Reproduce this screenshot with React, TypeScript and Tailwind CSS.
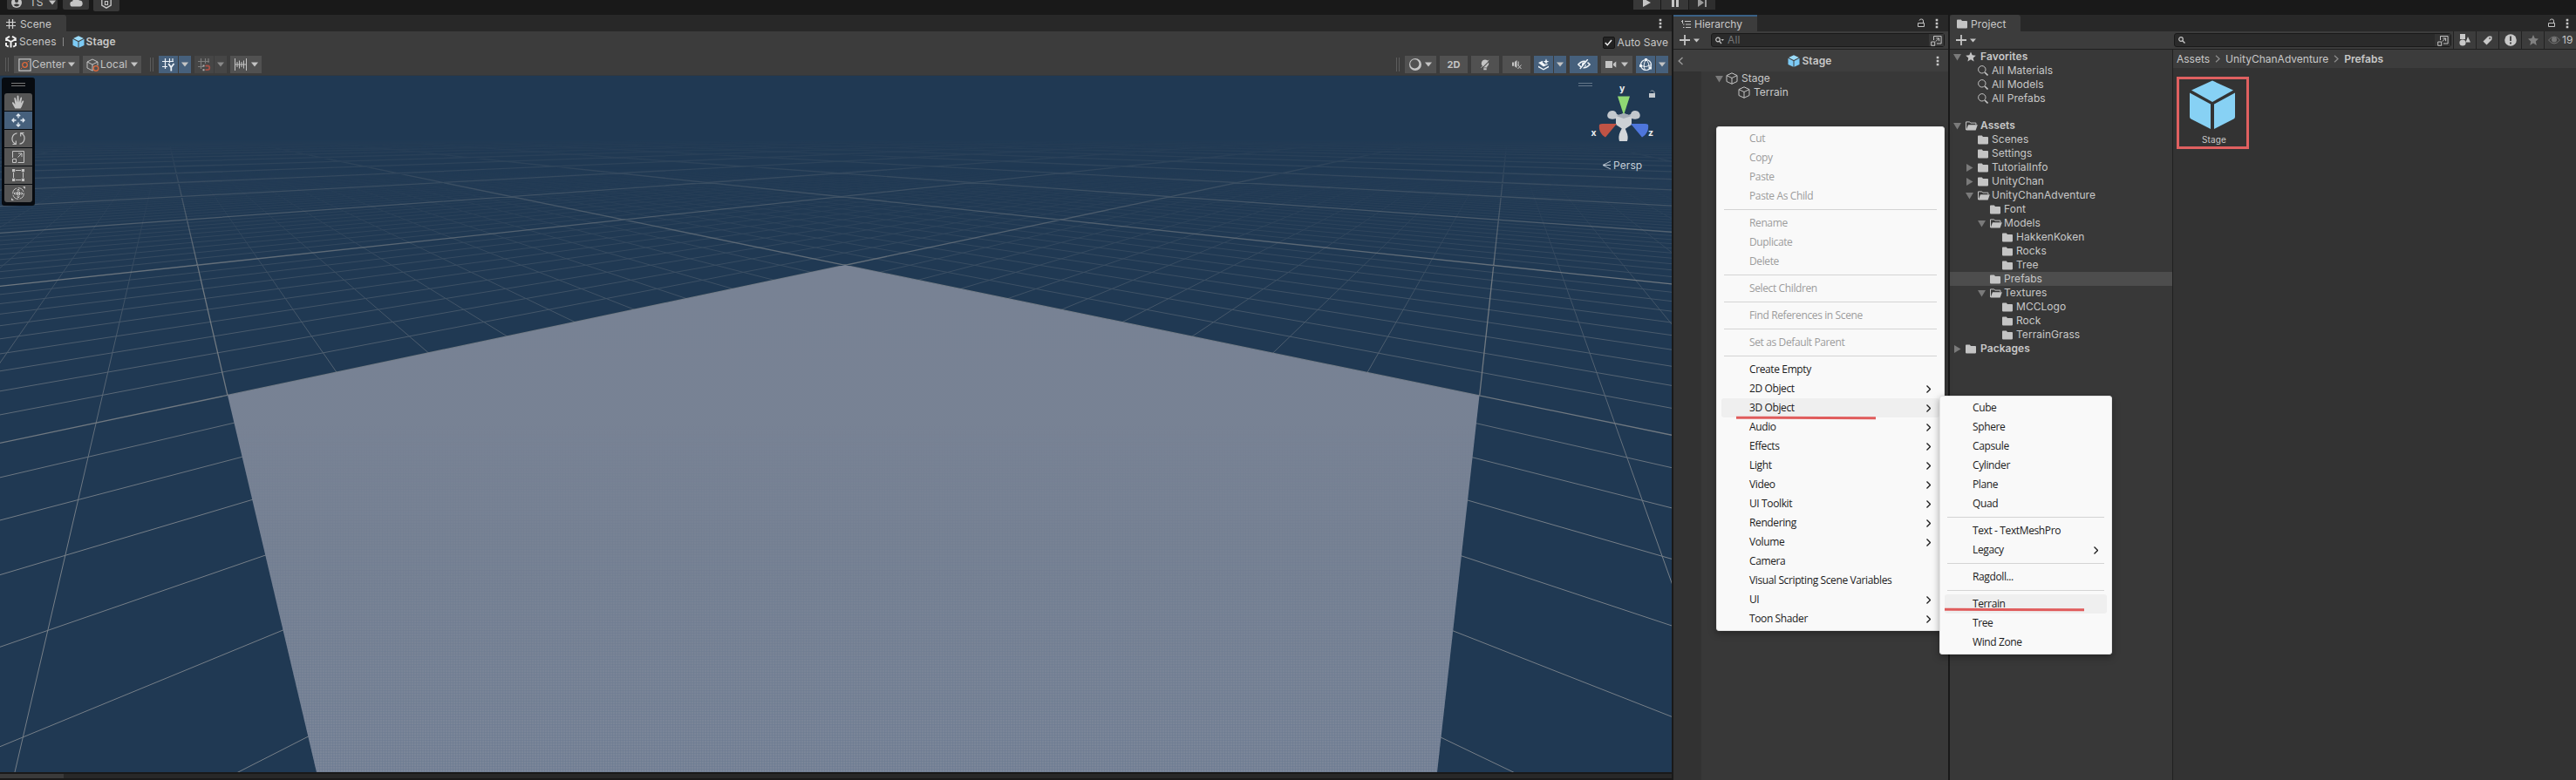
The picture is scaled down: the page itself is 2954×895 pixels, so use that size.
import { useState } from "react";
import type { ReactNode } from "react";

type MenuEntry = { label: string; disabled?: boolean; sub?: boolean; active?: boolean } | null;

const hierarchyMenu: MenuEntry[] = [
  { label: "Cut", disabled: true },
  { label: "Copy", disabled: true },
  { label: "Paste", disabled: true },
  { label: "Paste As Child", disabled: true },
  null,
  { label: "Rename", disabled: true },
  { label: "Duplicate", disabled: true },
  { label: "Delete", disabled: true },
  null,
  { label: "Select Children", disabled: true },
  null,
  { label: "Find References in Scene", disabled: true },
  null,
  { label: "Set as Default Parent", disabled: true },
  null,
  { label: "Create Empty" },
  { label: "2D Object", sub: true },
  { label: "3D Object", sub: true, active: true },
  { label: "Audio", sub: true },
  { label: "Effects", sub: true },
  { label: "Light", sub: true },
  { label: "Video", sub: true },
  { label: "UI Toolkit", sub: true },
  { label: "Rendering", sub: true },
  { label: "Volume", sub: true },
  { label: "Camera" },
  { label: "Visual Scripting Scene Variables" },
  { label: "UI", sub: true },
  { label: "Toon Shader", sub: true },
];

const objectMenu: MenuEntry[] = [
  { label: "Cube" },
  { label: "Sphere" },
  { label: "Capsule" },
  { label: "Cylinder" },
  { label: "Plane" },
  { label: "Quad" },
  null,
  { label: "Text - TextMeshPro" },
  { label: "Legacy", sub: true },
  null,
  { label: "Ragdoll..." },
  null,
  { label: "Terrain", active: true },
  { label: "Tree" },
  { label: "Wind Zone" },
];

type Folder = { name: string; depth: number; open?: boolean; arrow?: boolean; bold?: boolean; selected?: boolean };

const folders: Folder[] = [
  { name: "Assets", depth: 0, open: true, arrow: true, bold: true },
  { name: "Scenes", depth: 1 },
  { name: "Settings", depth: 1 },
  { name: "TutorialInfo", depth: 1, arrow: true },
  { name: "UnityChan", depth: 1, arrow: true },
  { name: "UnityChanAdventure", depth: 1, open: true, arrow: true },
  { name: "Font", depth: 2 },
  { name: "Models", depth: 2, open: true, arrow: true },
  { name: "HakkenKoken", depth: 3 },
  { name: "Rocks", depth: 3 },
  { name: "Tree", depth: 3 },
  { name: "Prefabs", depth: 2, selected: true },
  { name: "Textures", depth: 2, open: true, arrow: true },
  { name: "MCCLogo", depth: 3 },
  { name: "Rock", depth: 3 },
  { name: "TerrainGrass", depth: 3 },
  { name: "Packages", depth: 0, arrow: true, bold: true },
];

const indents = ["pl-[4px]", "pl-[18px]", "pl-[32px]", "pl-[46px]"];

function Icon({ w = 16, h = 16, className = "", children }: { w?: number; h?: number; className?: string; children: ReactNode }) {
  return (
    <svg width={w} height={h} viewBox={`0 0 ${w} ${h}`} fill="none" stroke="currentColor" className={`shrink-0 ${className}`}>
      {children}
    </svg>
  );
}

function Caret({ className = "" }: { className?: string }) {
  return (
    <Icon w={8} h={6} className={className}>
      <path d="M0 .5h8L4 5.5z" fill="currentColor" stroke="none" />
    </Icon>
  );
}

function Dots() {
  return (
    <Icon w={4} h={12} className="text-[#c8c8c8]">
      <path d="M.7.8h2.6v2.4H.7zM.7 4.8h2.6v2.4H.7zM.7 8.8h2.6v2.4H.7z" fill="currentColor" stroke="none" />
    </Icon>
  );
}

function Lock() {
  return (
    <Icon w={10} h={11} className="text-[#c4c4c4]">
      <path d="M1.5 5.5h7v4h-7zM7.5 5V3a2 2 0 0 0-2-2H5a2 2 0 0 0-2 1.6" />
    </Icon>
  );
}

function Grip() {
  return <div className="h-4 w-[4px] border-x border-[#5c5c5c]" />;
}

function PrefabCube() {
  return (
    <Icon w={14} h={14}>
      <path d="M7 .2 12.9 3 7 6 1.1 3z" fill="#9bdcfb" stroke="none" />
      <path d="M.5 3.8 6.5 6.9v6.9L.5 10.9zM13.5 3.8 7.5 6.9v6.9l6-2.9z" fill="#7ccaf5" stroke="none" />
    </Icon>
  );
}

function CubeOutline() {
  return (
    <Icon w={14} h={14} className="text-[#c4c4c4]">
      <path d="M7 .8 13 3.6v6.9l-6 2.8-6-2.8V3.6zM1 3.6l6 2.9 6-2.9M7 6.5v6.8" />
    </Icon>
  );
}

function FolderIcon({ open }: { open?: boolean }) {
  if (open) {
    return (
      <Icon w={14} h={11} className="text-[#c4c4c4]">
        <path d="M.5 10V.9h4.2l1 1.2h6.2v2" />
        <path d="M3 4.3h10.8L11.6 10.6H.6z" fill="currentColor" stroke="none" />
      </Icon>
    );
  }
  return (
    <Icon w={14} h={11} className="text-[#c4c4c4]">
      <path d="M0 1.4Q0 .6.8.6h4L6 2.1h5.2q.8 0 .8.8v6.7q0 .8-.8.8H.8Q0 10.4 0 9.6z" fill="currentColor" stroke="none" />
    </Icon>
  );
}

function Fold({ open }: { open?: boolean }) {
  return (
    <Icon w={9} h={9} className="text-[#7a7a7a]">
      <path d={open ? "M0 1h9L4.5 8.5z" : "M1 0v9l7.5-4.5z"} fill="currentColor" stroke="none" />
    </Icon>
  );
}

function Plus() {
  return (
    <div className="flex items-center gap-[4px] text-[#c4c4c4]">
      <Icon w={12} h={12}>
        <path d="M6 0v12M0 6h12" strokeWidth="1.8" />
      </Icon>
      <Icon w={7} h={5}>
        <path d="M0 .5h7L3.5 4.5z" fill="currentColor" stroke="none" />
      </Icon>
    </div>
  );
}

function SearchWindow() {
  return (
    <Icon w={13} h={13} className="text-[#c4c4c4]">
      <path d="M3.500 6V1.500h8.600V10H7M.7 8h4v4.300h-4zM5.800 7.600l3.600-3.700M6.300 3.900h3.300v3.300" />
    </Icon>
  );
}

function Menu({ items, className }: { items: MenuEntry[]; className: string }) {
  return (
    <div
      className={`absolute rounded-[3px] border border-[#e4e4e4] bg-[#f9f9f9] py-[2px] font-['Open_Sans','Noto_Sans',sans-serif] text-[12px] tracking-[-0.38px] shadow-[0_3px_8px_rgba(0,0,0,0.35)] ${className}`}
    >
      {items.map((item, i) =>
        item === null ? (
          <div key={i} className="flex h-[9px] items-center px-[8px]">
            <div className="h-px w-full bg-[#d4d4d4]" />
          </div>
        ) : (
          <div
            key={i}
            className={`mx-[5px] flex h-[22px] items-center justify-between rounded-[3px] pr-[10px] pl-[32px] ${item.active ? "bg-[#efefef]" : ""} ${item.disabled ? "text-[#9c9c9c]" : "text-[#1b1b1b]"}`}
          >
            <span className="whitespace-nowrap">{item.label}</span>
            {item.sub && (
              <Icon w={5} h={9}>
                <path d="M.5.5l4 4-4 4" strokeWidth="1.3" />
              </Icon>
            )}
          </div>
        )
      )}
    </div>
  );
}

// Perspective ground grid. One unit is one major cell, ten minor cells each.
const vpU = [189.5, 57];
const vpV = [1730, 57];
const apex = [969, 217.3];
const cu = -0.4828;
const cv = -0.482;

function project(u: number, v: number) {
  const w = 1 + cu * u + cv * v;
  const x = (apex[0] + u * cu * vpU[0] + v * cv * vpV[0]) / w;
  const y = (apex[1] + u * cu * vpU[1] + v * cv * vpV[1]) / w;
  return `${x.toFixed(1)} ${y.toFixed(1)}`;
}

function gridPath(step: number, range: number, skip: boolean) {
  let d = "";
  const n = Math.round(range / step);
  for (let i = -n; i <= n; i++) {
    if (skip && i % 10 === 0) continue;
    const k = i * step;
    const uFar = (1 + cv * k - 40) / -cu;
    const vFar = (1 + cu * k - 40) / -cv;
    // the k = 1 lines stop at the terrain corners
    const uNear = k === 1 ? 0 : (1 + cv * k - 0.08) / -cu;
    const vNear = k === 1 ? 0 : (1 + cu * k - 0.08) / -cv;
    d += `M${project(uFar, k)}L${project(uNear, k)}M${project(k, vFar)}L${project(k, vNear)}`;
  }
  return d;
}

const minorGrid = gridPath(0.1, 7, true);
const majorGrid = gridPath(1, 40, false);

function SceneView() {
  return (
    <svg width="1917" height="799" viewBox="0 0 1917 799" className="block">
      <defs>
        <linearGradient id="minorFade" x1="0" y1="0" x2="0" y2="799" gradientUnits="userSpaceOnUse">
          <stop offset="0.13" stopColor="#fff" stopOpacity="0" />
          <stop offset="0.2" stopColor="#fff" stopOpacity="0.12" />
          <stop offset="0.32" stopColor="#fff" stopOpacity="0.36" />
          <stop offset="0.46" stopColor="#fff" stopOpacity="0.65" />
          <stop offset="0.65" stopColor="#fff" stopOpacity="0.95" />
        </linearGradient>
        <linearGradient id="majorFade" x1="0" y1="0" x2="0" y2="799" gradientUnits="userSpaceOnUse">
          <stop offset="0.09" stopColor="#fff" stopOpacity="0" />
          <stop offset="0.13" stopColor="#fff" stopOpacity="0.16" />
          <stop offset="0.2" stopColor="#fff" stopOpacity="0.45" />
          <stop offset="0.3" stopColor="#fff" stopOpacity="0.85" />
        </linearGradient>
        <linearGradient id="ground" x1="0" y1="0" x2="0" y2="1">
          <stop offset="0" stopColor="#788294" />
          <stop offset="0.6" stopColor="#778294" />
          <stop offset="1" stopColor="#7b8699" />
        </linearGradient>
        <pattern id="weave" width="3" height="3" patternUnits="userSpaceOnUse">
          <path d="M0 .5h3M.5 0v3" stroke="#5f708a" strokeWidth="0.5" />
        </pattern>
        <linearGradient id="weaveFade" x1="0" y1="0" x2="0" y2="799" gradientUnits="userSpaceOnUse">
          <stop offset="0.5" stopColor="#fff" stopOpacity="0" />
          <stop offset="1" stopColor="#fff" stopOpacity="0.6" />
        </linearGradient>
        <mask id="minorMask" maskUnits="userSpaceOnUse" x="0" y="0" width="1917" height="799">
          <rect width="1917" height="799" fill="url(#minorFade)" />
        </mask>
        <mask id="majorMask" maskUnits="userSpaceOnUse" x="0" y="0" width="1917" height="799">
          <rect width="1917" height="799" fill="url(#majorFade)" />
        </mask>
        <mask id="weaveMask" maskUnits="userSpaceOnUse" x="0" y="0" width="1917" height="799">
          <rect width="1917" height="799" fill="url(#weaveFade)" />
        </mask>
      </defs>
      <rect width="1917" height="799" fill="#203953" />
      <g mask="url(#minorMask)">
        <path d={minorGrid} stroke="#7b838b" strokeWidth="1" fill="none" />
      </g>
      <g mask="url(#majorMask)">
        <path d={majorGrid} stroke="#7e8489" strokeWidth="1.3" fill="none" />
      </g>
      <path d="M969 217.3 1696.5 367 1648 799H363L261 366.5z" fill="url(#ground)" />
      <g mask="url(#weaveMask)">
        <path d="M969 217.3 1696.5 367 1648 799H363L261 366.5z" fill="url(#weave)" />
      </g>
    </svg>
  );
}

function AxisGizmo() {
  return (
    <svg width="110" height="115" viewBox="1805 87 110 115" className="absolute top-0 left-[1805px] font-[Inter,sans-serif]">
      <path d="M1810 95.5h16M1810 98.5h16" stroke="#66788a" />
      <path d="M1849 127c-5 0-7 5-5 8 2 2 6 2 9 1l7 3 2-5-8-3c-1-3-2-4-5-4zM1875 127c5 0 7 5 5 8-2 2-6 2-9 1l-7 3-2-5 8-3c1-3 2-4 5-4z" fill="#c3c8cd" />
      <path d="M1862 143l3 8c2 4 2 8 1 11h-9c-1-3-1-7 1-11z" fill="#d3d6da" />
      <path d="M1853 133l9-3 9 3v10l-9 6-9-6z" fill="#cdd1d5" />
      <path d="M1853 133l9-3 9 3-9 3z" fill="#a5abb5" />
      <path d="M1855 110.500h14l-6.500 20h-1z" fill="#8fd873" />
      <path d="M1834 143q2-1.500 5-1h15l-13 15.500c-5-3-8-8-7-14.500z" fill="#c05345" />
      <path d="M1890 143q-2-1.500-5-1h-15l13 15.500c5-3 8-8 7-14.500z" fill="#4e76dc" />
      <path d="M1891 107h7v5h-7z" fill="#c4c9ce" />
      <path d="M1897 107v-1.500a2.500 2 0 0 0-4.500-.5" stroke="#9aa5ae" fill="none" />
      <g fill="#e8ebee" fontSize="10.500" fontWeight="700" textAnchor="middle">
        <text x="1860.300" y="105">y</text>
        <text x="1827.700" y="156">x</text>
        <text x="1893" y="156">z</text>
      </g>
      <path d="M1847 185l-9 4.500 9 4.500M1838 189.500h9" stroke="#b9c4cf" fill="none" />
      <text x="1850" y="194" fill="#c5ced7" fontSize="12">Persp</text>
    </svg>
  );
}

const toolIcons: ReactNode[] = [
  <path d="M4.300 15.500 1 9.500c-.4-1 .9-1.600 1.600-.7L4.500 11 3.300 4c-.1-1.200 1.400-1.400 1.700-.2L6.500 8.500 6.600 1.500C6.700.3 8.300.3 8.400 1.500L8.800 8.500l1.700-5.300c.4-1 1.800-.7 1.600.5L11 9.500l1.800-2.700c.6-.8 1.700-.3 1.400.7l-2.400 6-1.300 2z" fill="currentColor" stroke="none" />,
  <path d="M8 1v4.500M8 10.500V15M1 8h4.500M10.500 8H15M5.800 3.200 8 1l2.200 2.200M5.800 12.800 8 15l2.200-2.200M3.200 5.800 1 8l2.200 2.200M12.800 5.800 15 8l-2.200 2.200" strokeWidth="1.300" />,
  <path d="M6.500 1.800A6.500 6.500 0 0 0 4.500 14M1.500 14.500h3.800v-4M9.500 14.200A6.500 6.500 0 0 0 11.500 2M14.500 1.500h-3.800v4" strokeWidth="1.200" />,
  <path d="M1.500 9V1.500h13v13H7.500M1.500 10.500h4v4h-4zM7.500 8.500l4.300-4.300M8 4h4v4" />,
  <>
    <path d="M5 2.500h6M5 13.500h6M2.500 5v6M13.500 5v6" />
    <path d="M1 1h3.200v3.200H1zM11.800 1H15v3.200h-3.200zM1 11.800h3.200V15H1zM11.800 11.800H15V15h-3.200z" fill="currentColor" stroke="none" />
  </>,
  <>
    <circle cx="8" cy="8" r="6.300" strokeDasharray="8 1.500" />
    <path d="M8 3v10M3 8h10M6.500 4.500 8 3l1.500 1.500M6.500 11.500 8 13l1.500-1.500M4.500 6.500 3 8l1.500 1.500M11.500 6.500 13 8l-1.500 1.500M6.500 6v4M9.500 6v4" />
    <path d="M13 0h3v3zM0 13v3h3z" fill="currentColor" stroke="none" />
  </>,
];

function ToolPalette() {
  const [tool, setTool] = useState(1);
  return (
    <div className="absolute top-[2px] left-[2px] flex h-[147px] w-[38px] flex-col items-center rounded-[3px] bg-[#070b10]">
      <div className="mt-[6px] mb-[8px] h-[4px] w-4 border-y border-[#7a7a7a]" />
      <div className="flex flex-col gap-px overflow-hidden rounded-[3px]">
        {toolIcons.map((icon, i) => (
          <button
            key={i}
            onClick={() => setTool(i)}
            className={`flex h-[20px] w-[32px] items-center justify-center ${tool === i ? "bg-[#46607c] text-[#e4ecf4]" : "bg-[#555555] text-[#c4c4c4]"}`}
          >
            <Icon>{icon}</Icon>
          </button>
        ))}
      </div>
    </div>
  );
}

function Button({ className = "", children }: { className?: string; children: ReactNode }) {
  return <div className={`flex h-[20px] items-center justify-center ${className}`}>{children}</div>;
}

function SceneToolbar() {
  return (
    <div className="flex h-[25px] shrink-0 items-center justify-between border-b border-[#33383d] bg-[#3c3c3c] pr-[4px] pl-[6px] text-[#c4c4c4]">
      <div className="flex items-center">
        <Grip />
        <Button className="ml-[6px] w-[75px] bg-[#515151]">
          <Icon w={15} h={15}>
            <path d="M.9.9h13.200v13.200H.9z" strokeWidth="1.200" />
            <circle cx="7.500" cy="7.500" r="2.800" stroke="#e0693c" strokeWidth="1.300" />
            <path d="M2.800 12.200l1.500-1.500M10.700 4.300l1.500-1.500" stroke="#e0693c" />
          </Icon>
          <span className="mr-[3px] ml-px">Center</span>
          <Caret />
        </Button>
        <Button className="ml-[4px] w-[67px] bg-[#515151]">
          <Icon w={15} h={15}>
            <path d="M8 13.500 7 14 1 11V4l6-3 6 3v4M1 4l6 3 6-3M7 7v6.500" />
            <circle cx="11" cy="11.500" r="2.800" fill="#515151" stroke="#e0693c" strokeWidth="1.300" />
          </Icon>
          <span className="mr-[4px] ml-px">Local</span>
          <Caret />
        </Button>
        <div className="mr-[6px] ml-[10px]">
          <Grip />
        </div>
        <Button className="w-[22px] bg-[#46607c] text-[#eef3f8]">
          <Icon w={15} h={15}>
            <path d="M3.500 0v12M8.500 0v5M12 0v4M0 3.500h13M0 9.500h6" strokeWidth="1.200" />
            <path d="M7.200 6l3 4.200L13.500 6M10.300 10v4.500" strokeWidth="1.800" />
          </Icon>
        </Button>
        <Button className="ml-px w-[14px] bg-[#46607c]">
          <Caret />
        </Button>
        <Button className="ml-[4px] w-[22px] bg-[#464646] text-[#7c7c7c]">
          <Icon w={15} h={15}>
            <path d="M3.500 0v12M8.500 0v6M12 0v5M0 3.500h13M0 9.500h6" strokeWidth="1.200" />
            <path d="M8.500 8.500h2.500a2.200 2.200 0 0 1 0 4.600H8.500" stroke="#a55046" strokeWidth="1.800" />
            <path d="M5.500 7.500h2v2h-2zM5.500 12.300h2v2h-2z" fill="#b0b0b0" stroke="none" />
          </Icon>
        </Button>
        <Button className="ml-px w-[14px] bg-[#464646] text-[#8a8a8a]">
          <Caret />
        </Button>
        <Button className="ml-[4px] w-[36px] gap-[5px] bg-[#515151]">
          <Icon w={14} h={14}>
            <path d="M.5 0v14M13.500 0v14M3 4v6M5.500 2.500v9M8 4v6M10.500 2.500v9M.5 7h13" />
          </Icon>
          <Caret />
        </Button>
      </div>

      <div className="flex items-center">
        <Grip />
        <Button className="ml-[6px] w-[36px] gap-[4px] bg-[#515151]">
          <Icon w={14} h={14}>
            <path
              d="M7 0a7 7 0 1 1 0 14a7 7 0 1 1 0-14zM6.300 1.200a5.100 5.100 0 1 0 0 10.200a5.100 5.100 0 1 0 0-10.200z"
              fill="currentColor"
              fillRule="evenodd"
              stroke="none"
            />
          </Icon>
          <Caret />
        </Button>
        <Button className="ml-[4px] w-[32px] bg-[#515151] text-[11px] font-bold">2D</Button>
        <Button className="ml-[4px] w-[32px] bg-[#515151]">
          <Icon w={12} h={13}>
            <path d="M6 .5a4.200 4.200 0 0 1 2.300 7.700V9.500H3.700V8.200A4.200 4.200 0 0 1 6 .5zM4.300 10.300h3.400v1.900H4.300z" fill="currentColor" stroke="none" />
            <path d="M2 10.800l8.500-8.500" stroke="#515151" strokeWidth="1.200" />
            <path d="M1.300 9.800l9-9" strokeWidth=".8" />
          </Icon>
        </Button>
        <Button className="ml-[4px] w-[32px] bg-[#515151]">
          <Icon w={13} h={12}>
            <path d="M1 3.500h2.300L6.500 1v9L3.300 7.800H1z" fill="currentColor" stroke="none" />
            <path d="M3.500 1v8" stroke="#515151" strokeWidth=".8" />
            <path d="M8.200 2.500v5M7.500 6.500l4 4.500M11.500 6.500l-4 4.500" />
          </Icon>
        </Button>
        <Button className="ml-[4px] w-[22px] bg-[#46607c] text-[#f0f4f8]">
          <Icon w={14} h={14}>
            <path d="M1 5l5-2.200v2L9 7l2.500-.8 1 .5L7 9.500zM1 8.500 7 12l6-3.500v1.800L7 13.500 1 10.300z" fill="currentColor" stroke="none" />
            <path d="M10 .3l.9 2.500 2.500.9-2.500.9-.9 2.500-.9-2.500-2.500-.9 2.500-.9z" fill="currentColor" stroke="none" />
          </Icon>
        </Button>
        <Button className="ml-px w-[14px] bg-[#46607c]">
          <Caret />
        </Button>
        <Button className="ml-[4px] w-[32px] bg-[#46607c] text-[#f0f4f8]">
          <Icon w={15} h={12}>
            <path d="M.8 6Q7.500-1.500 14.200 6 7.500 13.500.8 6z" strokeWidth="1.400" />
            <circle cx="7.500" cy="6" r="2.200" fill="currentColor" />
            <path d="M3.500 11.800l9-11" stroke="#46607c" strokeWidth="2" />
            <path d="M2.800 11l9-11" strokeWidth="1.400" />
          </Icon>
        </Button>
        <Button className="ml-[4px] w-[36px] gap-[5px] bg-[#515151]">
          <Icon w={13} h={10}>
            <path d="M0 1h8v8H0zM9 4l3.300-2.500v7L9 6z" fill="currentColor" stroke="none" />
          </Icon>
          <Caret />
        </Button>
        <Button className="ml-[4px] w-[22px] bg-[#46607c] text-[#f0f4f8]">
          <Icon w={15} h={15}>
            <circle cx="7.500" cy="7.500" r="6" strokeWidth="1.200" />
            <path d="M7.500 1.500Q3.500 7 6.500 13.500M7.500 1.500Q11.500 5 11 11.500M1.500 8.500Q7.500 11 13.500 7.500" />
            <path d="M6 0h3v3H6zM0 7h3v3H0zM11 9.500h3v3h-3z" fill="currentColor" stroke="none" />
          </Icon>
        </Button>
        <Button className="ml-px w-[14px] bg-[#46607c]">
          <Caret />
        </Button>
      </div>
    </div>
  );
}

function TopBar() {
  return (
    <header className="flex h-[17px] shrink-0 items-start overflow-hidden bg-[#191919] pl-[8px] text-[#c4c4c4]">
      <div className="-mt-[9px] flex h-[20px] w-[58px] items-center rounded-[2px] bg-[#383838] pt-[4px] pl-[5px]">
        <Icon w={12} h={12}>
          <circle cx="6" cy="6" r="6" fill="currentColor" stroke="none" />
          <circle cx="6" cy="4" r="2" fill="#383838" stroke="none" />
          <path d="M2.500 8.800Q6 5.500 9.500 8.800 6 12 2.500 8.800z" fill="#383838" stroke="none" />
        </Icon>
        <span className="ml-[9px] text-[12px]">TS</span>
        <Caret className="ml-[6px]" />
      </div>
      <div className="-mt-[9px] ml-[6px] flex h-[20px] w-[30px] items-center justify-center rounded-[2px] bg-[#383838] pt-[3px]">
        <Icon w={15} h={11}>
          <path d="M3.500 10.500a3 3 0 0 1-.3-6 4 4 0 0 1 7.600-1 3.500 3.500 0 0 1 .7 7z" fill="currentColor" stroke="none" />
        </Icon>
      </div>
      <div className="-mt-[9px] ml-[5px] flex h-[22px] w-[30px] items-center justify-center rounded-[2px] bg-[#383838] pt-[2px]">
        <Icon w={12} h={14}>
          <path d="M6 .8l5.200 3v6.400L6 13.200.8 10.200V3.800z" strokeWidth="1.400" />
          <path d="M4.500 5.500h3v4h-3z" strokeWidth="1.200" />
        </Icon>
      </div>
      <div className="-mt-[9px] ml-[1736px] flex gap-px">
        <div className="flex h-[20px] w-[31px] items-center justify-center bg-[#383838] pt-[4px]">
          <Icon w={9} h={10}>
            <path d="M0 0v10l9-5z" fill="currentColor" stroke="none" />
          </Icon>
        </div>
        <div className="flex h-[20px] w-[31px] items-center justify-center bg-[#383838] pt-[4px]">
          <Icon w={8} h={10}>
            <path d="M0 0h3v10H0zM5 0h3v10H5z" fill="currentColor" stroke="none" />
          </Icon>
        </div>
        <div className="flex h-[20px] w-[30px] items-center justify-center bg-[#2e2e2e] pt-[4px] text-[#9a9a9a]">
          <Icon w={10} h={10}>
            <path d="M0 0v10l7-5zM8 0h2v10H8z" fill="currentColor" stroke="none" />
          </Icon>
        </div>
      </div>
    </header>
  );
}

function ScenePanel() {
  return (
    <section className="flex w-[1917px] shrink-0 flex-col">
      <div className="flex h-[19px] shrink-0 items-stretch justify-between bg-[#282828] pr-[11px]">
        <div className="flex w-[76px] items-center rounded-tr-[3px] bg-[#3c3c3c] pt-[2px] pl-[7px]">
          <Icon w={11} h={11} className="text-[#d2d2d2]">
            <path d="M3.500 0v11M7.500 0v11M0 3.500h11M0 7.500h11" strokeWidth="1.200" />
          </Icon>
          <span className="ml-[5px]">Scene</span>
        </div>
        <div className="flex items-center">
          <Dots />
        </div>
      </div>
      <div className="flex h-[26px] shrink-0 items-center justify-between bg-[#3c3c3c] pr-[4px] pl-[6px]">
        <div className="flex items-center pb-[3px]">
          <Icon w={13} h={14} className="text-[#f0f0f0]">
            <path d="M5 .8 1.200 3v3M8 .8 11.800 3v3M1 8v3l2.800 1.700M12 8v3l-2.800 1.700M1.500 4 6.500 7l5-3M6.500 7v6.500" strokeWidth="2" />
          </Icon>
          <span className="ml-[3px]">Scenes</span>
          <div className="mr-[10px] ml-[7px] h-[10px] w-px bg-[#8a8a8a]" />
          <PrefabCube />
          <span className="ml-[2px] font-semibold">Stage</span>
        </div>
        <div className="flex items-center">
          <div className="flex h-[14px] w-[14px] items-center justify-center rounded-[2px] border border-[#151515] bg-[#232323]">
            <Icon w={9} h={8} className="text-[#f0f0f0]">
              <path d="M.8 4l2.500 2.700L8 1" strokeWidth="1.500" />
            </Icon>
          </div>
          <span className="ml-[3px]">Auto Save</span>
        </div>
      </div>
      <SceneToolbar />
      <div className="relative h-[799px] shrink-0 overflow-hidden">
        <SceneView />
        <ToolPalette />
        <AxisGizmo />
      </div>
      <div className="h-[9px] border-y-2 border-[#191919] bg-[#282828]">
        <div className="h-full w-[73px] bg-[#3a3a3a]" />
      </div>
    </section>
  );
}

function HierarchyPanel() {
  return (
    <section className="ml-[2px] flex w-[315px] shrink-0 flex-col bg-[#383838]">
      <div className="flex h-[19px] shrink-0 items-stretch justify-between bg-[#282828] pr-[11px]">
        <div className="flex w-[96px] items-center border-t-2 border-[#3a6186] bg-[#3c3c3c] pl-[9px]">
          <Icon w={11} h={10} className="text-[#c4c4c4]">
            <path d="M0 1.500h2M4 1.500h7M2 5h1.500M5 5h6M2 8.500h1.500M5 8.500h6M1.500 0v4" />
          </Icon>
          <span className="ml-[4px] tracking-[0px]">Hierarchy</span>
        </div>
        <div className="flex items-center gap-[11px]">
          <Lock />
          <Dots />
        </div>
      </div>
      <div className="flex h-[21px] shrink-0 items-center border-b border-[#202020] bg-[#3c3c3c] pl-[7px]">
        <Plus />
        <div className="ml-[13px] flex h-[16px] w-[268px] items-center rounded-[3px] border border-[#191919] bg-[#2a2a2a] pl-[4px]">
          <Icon w={10} h={9} className="text-[#c4c4c4]">
            <circle cx="3" cy="3.500" r="2.300" strokeWidth="1.200" />
            <path d="M4.800 5.300 7 8" strokeWidth="1.300" />
            <path d="M6.500 3h3.500L8.300 5z" fill="currentColor" stroke="none" />
          </Icon>
          <span className="ml-[4px] text-[#757575]">All</span>
          <div className="ml-auto flex h-full w-[17px] items-center justify-center bg-[#383838]">
            <SearchWindow />
          </div>
        </div>
      </div>
      <div className="flex h-[25px] shrink-0 items-center bg-[#3e3e3e] pr-[10px] pl-[5px]">
        <Icon w={7} h={10} className="text-[#9a9a9a]">
          <path d="M5.500 1l-4.300 4 4.300 4" strokeWidth="1.400" />
        </Icon>
        <div className="flex flex-1 items-center justify-center gap-[2px]">
          <PrefabCube />
          <span className="font-semibold">Stage</span>
        </div>
        <Dots />
      </div>
      <div className="flex flex-1">
        <div className="w-[32px] bg-[#323232]" />
        <div className="flex-1 tracking-[0px]">
          <div className="flex h-[16px] items-center pl-[16px]">
            <Fold open />
            <div className="ml-[3px]">
              <CubeOutline />
            </div>
            <span className="ml-[4px]">Stage</span>
          </div>
          <div className="flex h-[16px] items-center pl-[42px]">
            <CubeOutline />
            <span className="ml-[4px]">Terrain</span>
          </div>
        </div>
      </div>
    </section>
  );
}

function ProjectPanel() {
  return (
    <section className="ml-[2px] flex min-w-0 flex-1 flex-col bg-[#383838]">
      <div className="flex h-[19px] shrink-0 items-stretch justify-between bg-[#282828] pr-[8px]">
        <div className="flex w-[81px] items-center rounded-t-[3px] bg-[#3c3c3c] pt-[2px] pl-[8px]">
          <FolderIcon />
          <span className="ml-[2px]">Project</span>
        </div>
        <div className="flex items-center gap-[11px]">
          <Lock />
          <Dots />
        </div>
      </div>
      <div className="flex h-[21px] shrink-0 items-center border-b border-[#202020] bg-[#3c3c3c] pl-[7px]">
        <Plus />
        <div className="ml-[227px] flex h-[16px] w-[318px] items-center rounded-[3px] border border-[#191919] bg-[#2a2a2a] pl-[4px]">
          <Icon w={8} h={8} className="text-[#c4c4c4]">
            <circle cx="3" cy="3" r="2.300" strokeWidth="1.200" />
            <path d="M4.800 4.800 7.500 7.500" strokeWidth="1.400" />
          </Icon>
          <div className="ml-auto flex h-full w-[18px] items-center justify-center bg-[#333333]">
            <SearchWindow />
          </div>
        </div>
        <div className="ml-[2px] flex h-full text-[#c8c8c8]">
          <div className="flex w-[26px] items-center justify-center border-l border-[#222222]">
            <Icon w={14} h={14}>
              <path d="M1 0h6v6H1zM13 9.500H7.500L10 3z" fill="currentColor" stroke="none" />
              <circle cx="4" cy="10" r="3.600" fill="currentColor" stroke="none" />
            </Icon>
          </div>
          <div className="flex w-[26px] items-center justify-center border-l border-[#222222]">
            <Icon w={11} h={11}>
              <path d="M.5 6.500 6 1q.5-.5 1.200-.5h2.300q1 0 1 1v2.300q0 .7-.5 1.200L4.500 10.500z" fill="currentColor" stroke="none" />
              <circle cx="8.200" cy="2.900" r=".9" fill="#3c3c3c" stroke="none" />
            </Icon>
          </div>
          <div className="flex w-[26px] items-center justify-center border-l border-[#222222]">
            <Icon w={14} h={14}>
              <circle cx="7" cy="7" r="6.800" fill="currentColor" stroke="none" />
              <path d="M7 2.500v5.500M7 9.500v2" stroke="#3c3c3c" strokeWidth="1.800" />
            </Icon>
          </div>
          <div className="flex w-[26px] items-center justify-center border-l border-[#222222] text-[#808080]">
            <Icon w={12} h={12}>
              <path d="M6 0l1.800 4.100 4.200.4L8.800 7.400 9.800 12 6 9.500 2.200 12l1-4.600L0 4.500l4.200-.4z" fill="currentColor" stroke="none" />
            </Icon>
          </div>
          <div className="flex items-center border-l border-[#222222] pl-[4px]">
            <Icon w={14} h={10} className="text-[#757575]">
              <path d="M.5 5Q7-3 13.500 5 7 13 .5 5z" />
              <circle cx="7" cy="4.500" r="3" fill="currentColor" stroke="none" />
            </Icon>
            <span className="ml-[2px]">19</span>
          </div>
        </div>
      </div>
      <div className="flex min-h-0 flex-1">
        <div className="w-[256px] shrink-0 border-r border-[#202020]">
          <div className="flex h-[16px] items-center pl-[4px]">
            <Fold open />
            <Icon w={12} h={12} className="ml-[5px] text-[#c4c4c4]">
              <path d="M6 .5l1.700 3.800 4.100.4-3.100 2.700.9 4.100L6 9.300l-3.600 2.200.9-4.100L.2 4.700l4.100-.4z" fill="currentColor" stroke="none" />
            </Icon>
            <span className="ml-[5px] font-semibold">Favorites</span>
          </div>
          {["All Materials", "All Models", "All Prefabs"].map((name) => (
            <div key={name} className="flex h-[16px] items-center pl-[32px] tracking-[0.05px]">
              <Icon w={12} h={12} className="text-[#c4c4c4]">
                <circle cx="4.800" cy="4.800" r="4.200" />
                <path d="M8 8l3.500 3.500" strokeWidth="1.600" />
              </Icon>
              <span className="ml-[4px]">{name}</span>
            </div>
          ))}
          <div className="h-[15px]" />
          {folders.map((f) => (
            <div key={f.name} className={`flex h-[16px] items-center tracking-[0.05px] ${indents[f.depth]} ${f.selected ? "bg-[#4d4d4d]" : ""}`}>
              <div className="mr-[5px] w-[9px]">{f.arrow && <Fold open={f.open} />}</div>
              <FolderIcon open={f.open} />
              <span className={f.bold ? "ml-[3px] font-semibold" : "ml-[2px]"}>{f.name}</span>
            </div>
          ))}
        </div>
        <div className="flex-1 bg-[#333333]">
          <div className="flex h-[21px] items-center bg-[#3c3c3c] pl-[4px] tracking-[0px]">
            <span>Assets</span>
            <Icon w={6} h={9} className="mx-[6px] text-[#8c8c8c]">
              <path d="M1 .8l4 3.700-4 3.700" strokeWidth="1.300" />
            </Icon>
            <span>UnityChanAdventure</span>
            <Icon w={6} h={9} className="mx-[6px] text-[#8c8c8c]">
              <path d="M1 .8l4 3.700-4 3.700" strokeWidth="1.300" />
            </Icon>
            <span className="font-semibold">Prefabs</span>
          </div>
          <div className="mt-[10px] ml-[4px] flex h-[83px] w-[83px] flex-col items-center border-[3px] border-[#e06060]">
            <Icon w={54} h={58} className="mr-[2px]">
              <path d="M27 1.500 51 12.500 27 26 3 12.500z" fill="#87d1f4" stroke="none" />
              <path d="M1 15.500 25 28.500V57L2.500 45.500Q1 44.500 1 43zM53 15.500 29 28.500V57l22.500-11.500q1.500-1 1.500-2.500z" fill="#87d1f4" stroke="none" />
            </Icon>
            <span className="mt-[4px] ml-[3px] text-[10px] leading-[14px]">Stage</span>
          </div>
        </div>
      </div>
    </section>
  );
}

export default function App() {
  return (
    <div className="relative flex h-[895px] w-[2954px] flex-col overflow-hidden bg-[#191919] font-[Inter,sans-serif] text-[12px] leading-[16px] tracking-[0.1px] text-[#c8c8c8]">
      <TopBar />
      <main className="flex min-h-0 flex-1">
        <ScenePanel />
        <HierarchyPanel />
        <ProjectPanel />
      </main>

      <Menu items={hierarchyMenu} className="top-[145px] left-[1968px] w-[262px]" />
      <Menu items={objectMenu} className="top-[454px] left-[2224px] w-[198px]" />

      {/* red markers under the picked entries */}
      <div className="absolute top-[478px] left-[1991px] h-[3px] w-[160px] rotate-[0.2deg] bg-[#e05c5c]" />
      <div className="absolute top-[698px] left-[2230px] h-[3px] w-[160px] rotate-[0.2deg] bg-[#e05c5c]" />
    </div>
  );
}
